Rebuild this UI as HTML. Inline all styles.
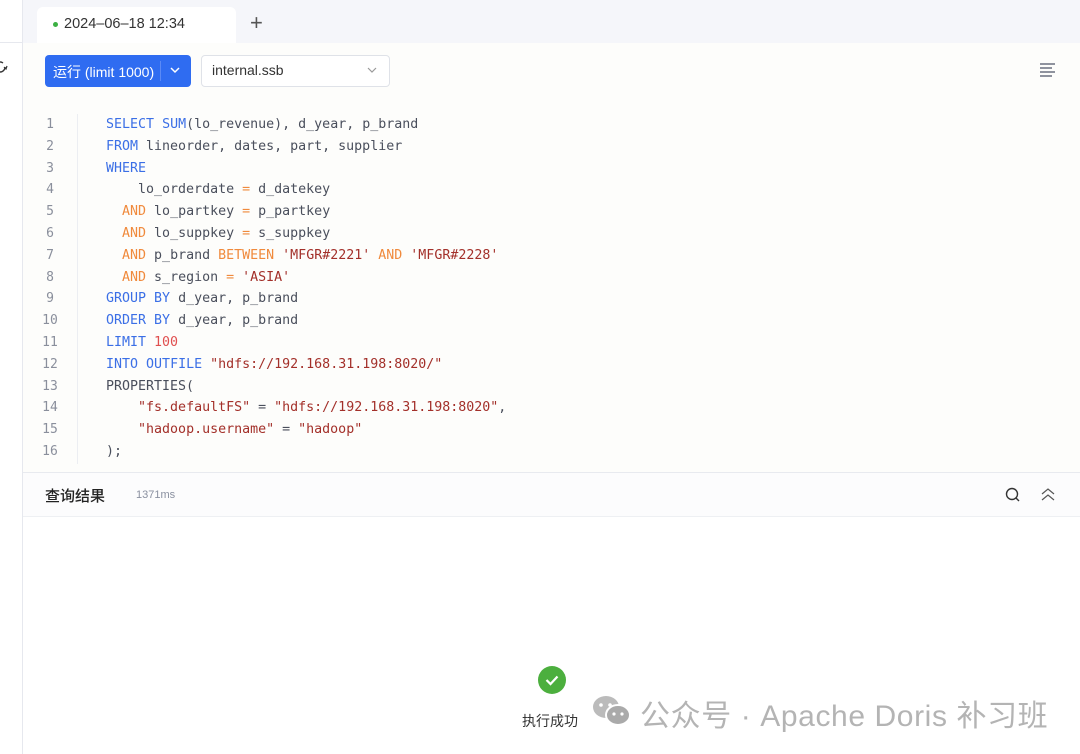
<!DOCTYPE html>
<html><head><meta charset="utf-8"><style>
*{margin:0;padding:0;box-sizing:border-box}
body{width:1080px;height:754px;overflow:hidden;background:#fff;font-family:"Liberation Sans","Noto Sans CJK SC",sans-serif;position:relative}
.abs{position:absolute}
.code{font-family:"DejaVu Sans Mono","Liberation Mono",monospace;font-size:13.3px;color:#4a4f5c;white-space:pre;line-height:21.8px}
.ln{font-family:"DejaVu Sans Mono",monospace;font-size:13px;color:#8a8f9c;width:30px;text-align:center;left:35px;line-height:21.8px}
.k{color:#3b6fe6}.o{color:#f08a3c}.s{color:#a3302a}.n{color:#e04f4f}
</style></head><body>
<div class="abs" style="left:23px;top:0;width:1057px;height:43px;background:#f5f6fa"></div>
<div class="abs" style="left:22px;top:0;width:1px;height:754px;background:#e6e8ee"></div>
<div class="abs" style="left:0;top:42px;width:22px;height:1px;background:#e6e8ee"></div>
<svg class="abs" style="left:-6px;top:60px" width="14" height="14"><path d="M11 7a5 5 0 1 1-2-4" stroke="#333" stroke-width="1.4" fill="none"/><path d="M10 7l2 2 1-3" stroke="#333" stroke-width="1.2" fill="none"/></svg>
<div class="abs" style="left:37px;top:7px;width:199px;height:36px;background:#fff;border-radius:6px 6px 0 0"></div>
<div class="abs" style="left:53px;top:22px;width:5px;height:5px;border-radius:50%;background:#3cb043"></div>
<div class="abs" style="left:64px;top:16px;font-size:14.5px;color:#333">2024–06–18 12:34</div>
<div class="abs" style="left:250px;top:10px;font-size:22px;color:#555;font-weight:300">+</div>
<div class="abs" style="left:23px;top:43px;width:1057px;height:429px;background:#fdfdfb"></div>
<div class="abs" style="left:45px;top:55px;width:146px;height:32px;background:#2f6cf1;border-radius:4px"></div>
<div class="abs" style="left:53px;top:62px;font-size:14px;color:#fff">运行 (limit 1000)</div>
<div class="abs" style="left:160px;top:61px;width:1px;height:20px;background:#5b8af5"></div>
<svg class="abs" style="left:169px;top:65px" width="12" height="10"><path d="M2 3l4 4 4-4" stroke="#fff" stroke-width="1.5" fill="none"/></svg>
<div class="abs" style="left:201px;top:55px;width:189px;height:32px;background:#fff;border:1px solid #dfe2e8;border-radius:4px"></div>
<div class="abs" style="left:212px;top:62px;font-size:14px;color:#333">internal.ssb</div>
<svg class="abs" style="left:366px;top:65px" width="12" height="10"><path d="M2 3l4 4 4-4" stroke="#999" stroke-width="1.2" fill="none"/></svg>
<svg class="abs" style="left:1039px;top:62px" width="18" height="16"><path d="M1 2h15M1 6h12M1 10h15M1 14h12" stroke="#6b7080" stroke-width="1.5"/></svg>
<div class="abs" style="left:77px;top:114px;width:1px;height:350px;background:#eceef2"></div>
<div class="abs ln" style="top:114px">1<br>2<br>3<br>4<br>5<br>6<br>7<br>8<br>9<br>10<br>11<br>12<br>13<br>14<br>15<br>16</div>
<div class="abs code" style="left:106px;top:114px"><span class="k">SELECT</span> <span class="k">SUM</span>(lo_revenue), d_year, p_brand
<span class="k">FROM</span> lineorder, dates, part, supplier
<span class="k">WHERE</span>
    lo_orderdate <span class="o">=</span> d_datekey
  <span class="o">AND</span> lo_partkey <span class="o">=</span> p_partkey
  <span class="o">AND</span> lo_suppkey <span class="o">=</span> s_suppkey
  <span class="o">AND</span> p_brand <span class="o">BETWEEN</span> <span class="s">'MFGR#2221'</span> <span class="o">AND</span> <span class="s">'MFGR#2228'</span>
  <span class="o">AND</span> s_region <span class="o">=</span> <span class="s">'ASIA'</span>
<span class="k">GROUP</span> <span class="k">BY</span> d_year, p_brand
<span class="k">ORDER</span> <span class="k">BY</span> d_year, p_brand
<span class="k">LIMIT</span> <span class="n">100</span>
<span class="k">INTO</span> <span class="k">OUTFILE</span> <span class="s">"hdfs://192.168.31.198:8020/"</span>
PROPERTIES(
    <span class="s">"fs.defaultFS"</span> = <span class="s">"hdfs://192.168.31.198:8020"</span>,
    <span class="s">"hadoop.username"</span> = <span class="s">"hadoop"</span>
);</div>
<div class="abs" style="left:23px;top:472px;width:1057px;height:1px;background:#e8eaef"></div>
<div class="abs" style="left:23px;top:473px;width:1057px;height:43px;background:#fcfcfd"></div>
<div class="abs" style="left:23px;top:516px;width:1057px;height:1px;background:#eef0f3"></div>
<div class="abs" style="left:45px;top:485px;font-size:15px;color:#222;font-weight:500">查询结果</div>
<div class="abs" style="left:136px;top:489px;font-size:11px;color:#8a90a0">1371ms</div>
<svg class="abs" style="left:1004px;top:486px" width="18" height="18"><circle cx="8" cy="8" r="5.5" stroke="#333" stroke-width="1.4" fill="none"/><path d="M12 12l3 3" stroke="#333" stroke-width="1.4"/></svg>
<svg class="abs" style="left:1039px;top:486px" width="18" height="18"><path d="M3 8l6-5 6 5M3 14l6-5 6 5" stroke="#555" stroke-width="1.2" fill="none"/></svg>
<div class="abs" style="left:538px;top:666px;width:28px;height:28px;border-radius:50%;background:#4caf3e"></div>
<svg class="abs" style="left:538px;top:666px" width="28" height="28"><path d="M8.5 14l4 4 7-7.5" stroke="#fff" stroke-width="2.2" fill="none"/></svg>
<div class="abs" style="left:522px;top:711px;font-size:14px;color:#333">执行成功</div>
<svg class="abs" style="left:591px;top:693px" width="42" height="36"><ellipse cx="15" cy="14" rx="13" ry="11" fill="#bbb"/><ellipse cx="27" cy="22" rx="12" ry="10" fill="#aaa" stroke="#fff" stroke-width="2"/><circle cx="10" cy="12" r="1.8" fill="#fff"/><circle cx="19" cy="12" r="1.8" fill="#fff"/><circle cx="23" cy="21" r="1.6" fill="#fff"/><circle cx="31" cy="21" r="1.6" fill="#fff"/></svg>
<div class="abs" style="left:640px;top:691px;font-size:30px;letter-spacing:0.6px;color:#b4b4b4;white-space:nowrap">公众号 · Apache Doris 补习班</div>
</body></html>
